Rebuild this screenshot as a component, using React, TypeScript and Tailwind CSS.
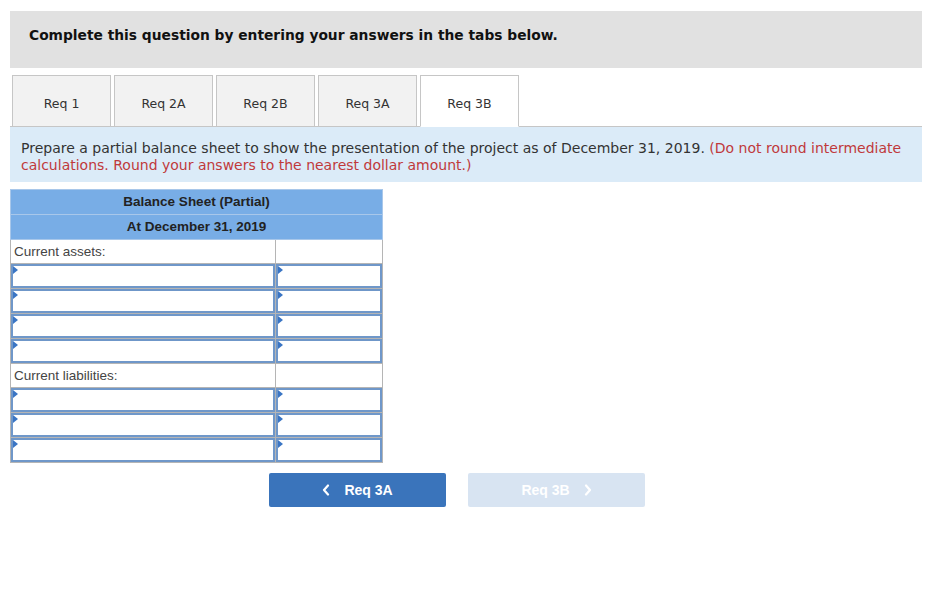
import React from "react";

const verdana = { fontFamily: '"DejaVu Sans", Verdana, sans-serif' };

function InputCell({ wide }: { wide?: boolean }) {
  return (
    <td className={`p-0 border border-[#b5b5b5] h-[24px] ${wide ? "w-[265px]" : ""}`}>
      <div className="relative h-[24px] border-2 border-[#6f97c9] bg-white">
        <div className="absolute left-0 top-0 w-0 h-0 border-t-[4px] border-b-[4px] border-l-[5px] border-t-transparent border-b-transparent border-l-[#3a75c4]" />
      </div>
    </td>
  );
}

function LabelRow({ label }: { label: string }) {
  return (
    <tr>
      <td className="border border-[#b5b5b5] h-[24px] px-[3px] text-[13.5px] leading-[16px] text-[#444] align-middle">{label}</td>
      <td className="border border-[#b5b5b5] h-[24px]"></td>
    </tr>
  );
}

function InputRow() {
  return (
    <tr>
      <InputCell wide />
      <InputCell />
    </tr>
  );
}

export default function App() {
  const tabs = ["Req 1", "Req 2A", "Req 2B", "Req 3A", "Req 3B"];
  return (
    <div className="w-[942px] h-[600px] bg-white pt-[11px] px-[10px]">
      <div className="w-[912px]">
        <div className="h-[57px] bg-[#e1e1e1] pl-[19px] pt-[12px]" style={verdana}>
          <span className="text-[13.8px] leading-[18px] font-bold text-[#111]">Complete this question by entering your answers in the tabs below.</span>
        </div>

        <div className="mt-[8px] flex items-end border-b border-[#c6c6c6] pl-[2px] gap-[3px] h-[51px]" style={verdana}>
          {tabs.map((t, i) => {
            const active = i === tabs.length - 1;
            return (
              <div
                key={t}
                className={`w-[99px] flex items-center justify-center pt-[6px] text-[12.5px] text-[#333] border border-[#c6c6c6] ${
                  active ? "bg-white border-b-white -mb-px h-[52px]" : "bg-[#f2f2f2] border-b-0 h-[51px]"
                }`}
              >
                {t}
              </div>
            );
          })}
        </div>

        <div className="h-[55px] bg-[#dbebf8] px-[11px] pt-[13px] text-[14px] leading-[17px] text-[#333]" style={verdana}>
          Prepare a partial balance sheet to show the presentation of the project as of December 31, 2019.{" "}
          <span className="text-[#c0393b]">(Do not round intermediate calculations. Round your answers to the nearest dollar amount.)</span>
        </div>

        <table
          className="mt-[7px] border-collapse w-[373px]"
          style={{ fontFamily: '"Liberation Sans", Arial, sans-serif' }}
        >
          <tbody>
            <tr>
              <td colSpan={2} className="h-[25px] bg-[#78ade6] border border-[#a8c7ea] text-center text-[13.5px] leading-[16px] font-bold text-[#222]">
                Balance Sheet (Partial)
              </td>
            </tr>
            <tr>
              <td colSpan={2} className="h-[25px] bg-[#78ade6] border border-[#a8c7ea] text-center text-[13.5px] leading-[16px] font-bold text-[#222]">
                At December 31, 2019
              </td>
            </tr>
            <LabelRow label="Current assets:" />
            <InputRow />
            <InputRow />
            <InputRow />
            <InputRow />
            <LabelRow label="Current liabilities:" />
            <InputRow />
            <InputRow />
            <InputRow />
          </tbody>
        </table>

        <div className="mt-[10px] ml-[259px] flex gap-[22px]" style={{ fontFamily: '"Liberation Sans", Arial, sans-serif' }}>
          <button className="w-[177px] h-[34px] rounded-[2px] bg-[#3a74bb] text-white text-[14px] font-bold flex items-center justify-center gap-[14px]">
            <svg width="8" height="12" viewBox="0 0 8 12" fill="none">
              <path d="M6 1.5L2 6l4 4.5" stroke="white" strokeWidth="2.2" strokeLinecap="round" strokeLinejoin="round" />
            </svg>
            <span>Req 3A</span>
          </button>
          <button className="w-[177px] h-[34px] rounded-[2px] bg-[#d8e4f2] text-white text-[14px] font-bold flex items-center justify-center gap-[14px]">
            <span>Req 3B</span>
            <svg width="8" height="12" viewBox="0 0 8 12" fill="none">
              <path d="M2 1.5L6 6l-4 4.5" stroke="white" strokeWidth="2.2" strokeLinecap="round" strokeLinejoin="round" />
            </svg>
          </button>
        </div>
      </div>
    </div>
  );
}
